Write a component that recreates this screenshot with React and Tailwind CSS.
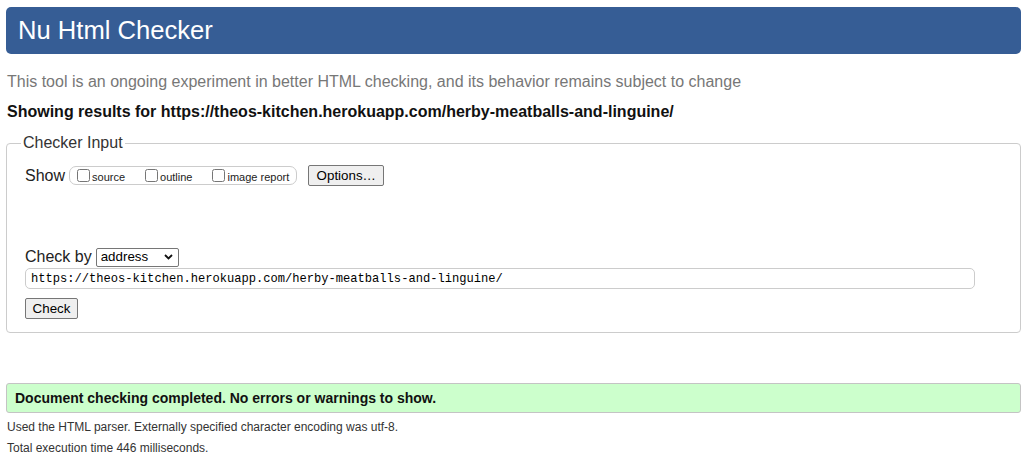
import React from 'react';

const Checkbox = ({ label }) => (
  <label className="flex items-center gap-[2px]">
    <input type="checkbox" className="m-0 h-[13px] w-[13px]" />
    <span className="text-[11px] leading-[13px] pt-[3px]">{label}</span>
  </label>
);

const App = () => {
  return (
    <div className="min-h-[460px] bg-white px-[6px] pt-[7px] text-[#222] font-['Liberation_Sans',Arial,sans-serif]">
      {/* header bar */}
      <div className="flex h-[47px] items-center rounded-[5px] bg-[#365d95] pl-[12px]">
        <h1 className="text-[25.6px] leading-none text-white">Nu Html Checker</h1>
      </div>

      <p className="mt-[18px] pl-[1px] text-[16px] leading-[20px] text-[#777]">
        This tool is an ongoing experiment in better HTML checking, and its behavior remains subject to change
      </p>
      <p className="mt-[10px] pl-[1px] text-[16px] font-bold leading-[20px] text-[#111]">
        Showing results for https://theos-kitchen.herokuapp.com/herby-meatballs-and-linguine/
      </p>

      <fieldset className="mt-[11px] rounded-[4px] border border-[#ccc] pb-[12px] pl-[18px] pr-[18px]">
        <legend className="-ml-[4px] px-[2px] text-[16px] leading-[20px] text-[#333]">Checker Input</legend>

        <div className="mt-[12px] flex items-center">
          <span className="text-[16px] leading-[20px] text-[#222] pr-[4px]">Show</span>
          <div className="flex h-[19px] items-center gap-[20px] rounded-[7px] border border-[#ccc] pl-[7px] pr-[7px]">
            <Checkbox label="source" />
            <Checkbox label="outline" />
            <Checkbox label="image report" />
          </div>
          <button className="ml-[11px] h-[21px] w-[76px] rounded-[2px] border border-[#767676] bg-[#efefef] text-[13.33px] leading-none text-black">
            Options…
          </button>
        </div>

        <div className="mt-[61px] flex items-center">
          <span className="text-[16px] leading-[20px] text-[#222]">Check by</span>
          <div className="ml-[4px] flex h-[19px] w-[83px] items-center justify-between rounded-[2px] border border-[#767676] pl-[4px] pr-[5px]">
            <span className="text-[13.33px] leading-none text-black">address</span>
            <svg width="9" height="6" viewBox="0 0 9 6" fill="none" className="shrink-0">
              <path d="M1 1l3.5 3.5L8 1" stroke="#111" strokeWidth="1.8" />
            </svg>
          </div>
        </div>

        <div className="mt-[1px] flex h-[21px] w-[950px] items-center rounded-[5px] border border-[#ccc] pl-[5px] pt-[2px]">
          <span className="text-[12.1px] leading-none text-black font-['Liberation_Mono','DejaVu_Sans_Mono',monospace]">
            https://theos-kitchen.herokuapp.com/herby-meatballs-and-linguine/
          </span>
        </div>

        <button className="mt-[9px] h-[21px] w-[53px] rounded-[2px] border border-[#767676] bg-[#efefef] text-[13.33px] leading-none text-black">
          Check
        </button>
      </fieldset>

      <div className="mt-[50px] flex h-[30px] items-center rounded-[3px] border border-[#c4c4c4] bg-[#ccffcc] pl-[8px]">
        <span className="text-[14px] font-bold leading-none text-[#111]">
          Document checking completed. No errors or warnings to show.
        </span>
      </div>

      <p className="mt-[6px] pl-[1px] text-[12px] leading-[16px] text-[#333]">
        Used the HTML parser. Externally specified character encoding was utf-8.
      </p>
      <p className="mt-[5px] pl-[1px] text-[12px] leading-[16px] text-[#333]">
        Total execution time 446 milliseconds.
      </p>
    </div>
  );
};

export default App;
